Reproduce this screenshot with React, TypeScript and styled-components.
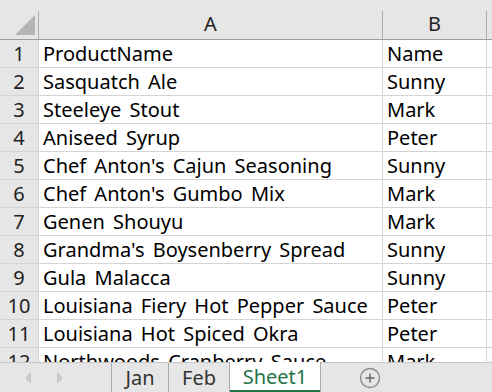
import React from "react";
import styled, { createGlobalStyle } from "styled-components";

const Global = createGlobalStyle`
  html, body { margin: 0; padding: 0; background: #ffffff; }
  body { width: 492px; height: 392px; overflow: hidden; font-family: "Noto Sans", "Open Sans", sans-serif; }
`;

const Page = styled.div`
  width: 492px;
  height: 392px;
  display: flex;
  flex-direction: column;
  overflow: hidden;
`;

const Grid = styled.div`
  flex: 1;
  overflow: hidden;
  display: flex;
  flex-direction: column;
`;

const Row = styled.div<{ $header?: boolean }>`
  display: grid;
  grid-template-columns: 38px 343px 103px 1fr;
  column-gap: 1px;
  background: ${(p) =>
    p.$header ? "linear-gradient(#e6e6e6 0 11px, #ababab 11px)" : "#d4d4d4"};
  height: ${(p) => (p.$header ? "39px" : "27px")};
  flex: none;
  border-bottom: 1px solid ${(p) => (p.$header ? "#9b9b9b" : "#d4d4d4")};
`;

const Corner = styled.div`
  background: #e6e6e6;
  position: relative;
`;

const Triangle = styled.div`
  position: absolute;
  left: 15px;
  top: 15px;
  width: 0;
  height: 0;
  border-left: 20px solid transparent;
  border-bottom: 20px solid #b4b4b4;
`;

const ColHead = styled.div`
  background: #e6e6e6;
  display: flex;
  align-items: flex-end;
  justify-content: center;
  font-size: 20px;
  line-height: 1;
  color: #222;
  padding-bottom: 5px;
`;

const RowNum = styled.div`
  background: #e6e6e6;
  display: flex;
  align-items: center;
  justify-content: center;
  font-size: 20px;
  color: #222;
`;

const Cell = styled.div`
  background: #fff;
  display: flex;
  align-items: center;
  padding-left: 4px;
  font-size: 20px;
  word-spacing: 3px;
  color: #000;
  white-space: nowrap;
  overflow: hidden;
`;

const TabBar = styled.div`
  height: 29px;
  flex: none;
  background: #e6e6e6;
  border-top: 1px solid #c6c6c6;
  display: flex;
  align-items: stretch;
`;

const Nav = styled.div`
  width: 111px;
  display: flex;
  align-items: center;
  padding-left: 24px;
  gap: 24px;
  box-sizing: border-box;
`;

const Tab = styled.div<{ $active?: boolean; $w: number }>`
  width: ${(p) => p.$w}px;
  box-sizing: border-box;
  display: flex;
  align-items: center;
  justify-content: center;
  font-size: 20px;
  line-height: 1;
  color: ${(p) => (p.$active ? "#217346" : "#333")};
  background: ${(p) => (p.$active ? "#fff" : "transparent")};
  border-left: 1px solid #ababab;
  margin-top: ${(p) => (p.$active ? "-1px" : "0")};
  box-shadow: ${(p) => (p.$active ? "inset 0 -2px 0 #217346" : "none")};
  border-right: ${(p) => (p.$active ? "1px solid #ababab" : "none")};
`;

const AddWrap = styled.div`
  display: flex;
  align-items: center;
  padding-left: 38px;
`;

const rows: [string, string][] = [
  ["ProductName", "Name"],
  ["Sasquatch Ale", "Sunny"],
  ["Steeleye Stout", "Mark"],
  ["Aniseed Syrup", "Peter"],
  ["Chef Anton's Cajun Seasoning", "Sunny"],
  ["Chef Anton's Gumbo Mix", "Mark"],
  ["Genen Shouyu", "Mark"],
  ["Grandma's Boysenberry Spread", "Sunny"],
  ["Gula Malacca", "Sunny"],
  ["Louisiana Fiery Hot Pepper Sauce", "Peter"],
  ["Louisiana Hot Spiced Okra", "Peter"],
  ["Northwoods Cranberry Sauce", "Mark"],
];

const Arrow = ({ dir }: { dir: "l" | "r" }) => (
  <svg width="8" height="12" viewBox="0 0 8 12">
    {dir === "l" ? (
      <polygon points="7,0 7,12 1,6" fill="#c8c8c8" />
    ) : (
      <polygon points="1,0 1,12 7,6" fill="#c8c8c8" />
    )}
  </svg>
);

export default function App() {
  return (
    <Page>
      <Global />
      <Grid>
        <Row $header>
          <Corner>
            <Triangle />
          </Corner>
          <ColHead>A</ColHead>
          <ColHead>B</ColHead>
          <ColHead />
        </Row>
        {rows.map((r, i) => (
          <Row key={i}>
            <RowNum>{i + 1}</RowNum>
            <Cell>{r[0]}</Cell>
            <Cell>{r[1]}</Cell>
            <Cell />
          </Row>
        ))}
      </Grid>
      <TabBar>
        <Nav>
          <Arrow dir="l" />
          <Arrow dir="r" />
        </Nav>
        <Tab $w={57}>Jan</Tab>
        <Tab $w={61}>Feb</Tab>
        <Tab $w={92} $active>
          Sheet1
        </Tab>
        <AddWrap>
          <svg width="22" height="22" viewBox="0 0 22 22">
            <circle cx="11" cy="11" r="9.5" fill="none" stroke="#8a8a8a" strokeWidth="1.3" />
            <path d="M11 6.5v9M6.5 11h9" stroke="#6a6a6a" strokeWidth="1.5" />
          </svg>
        </AddWrap>
      </TabBar>
    </Page>
  );
}
